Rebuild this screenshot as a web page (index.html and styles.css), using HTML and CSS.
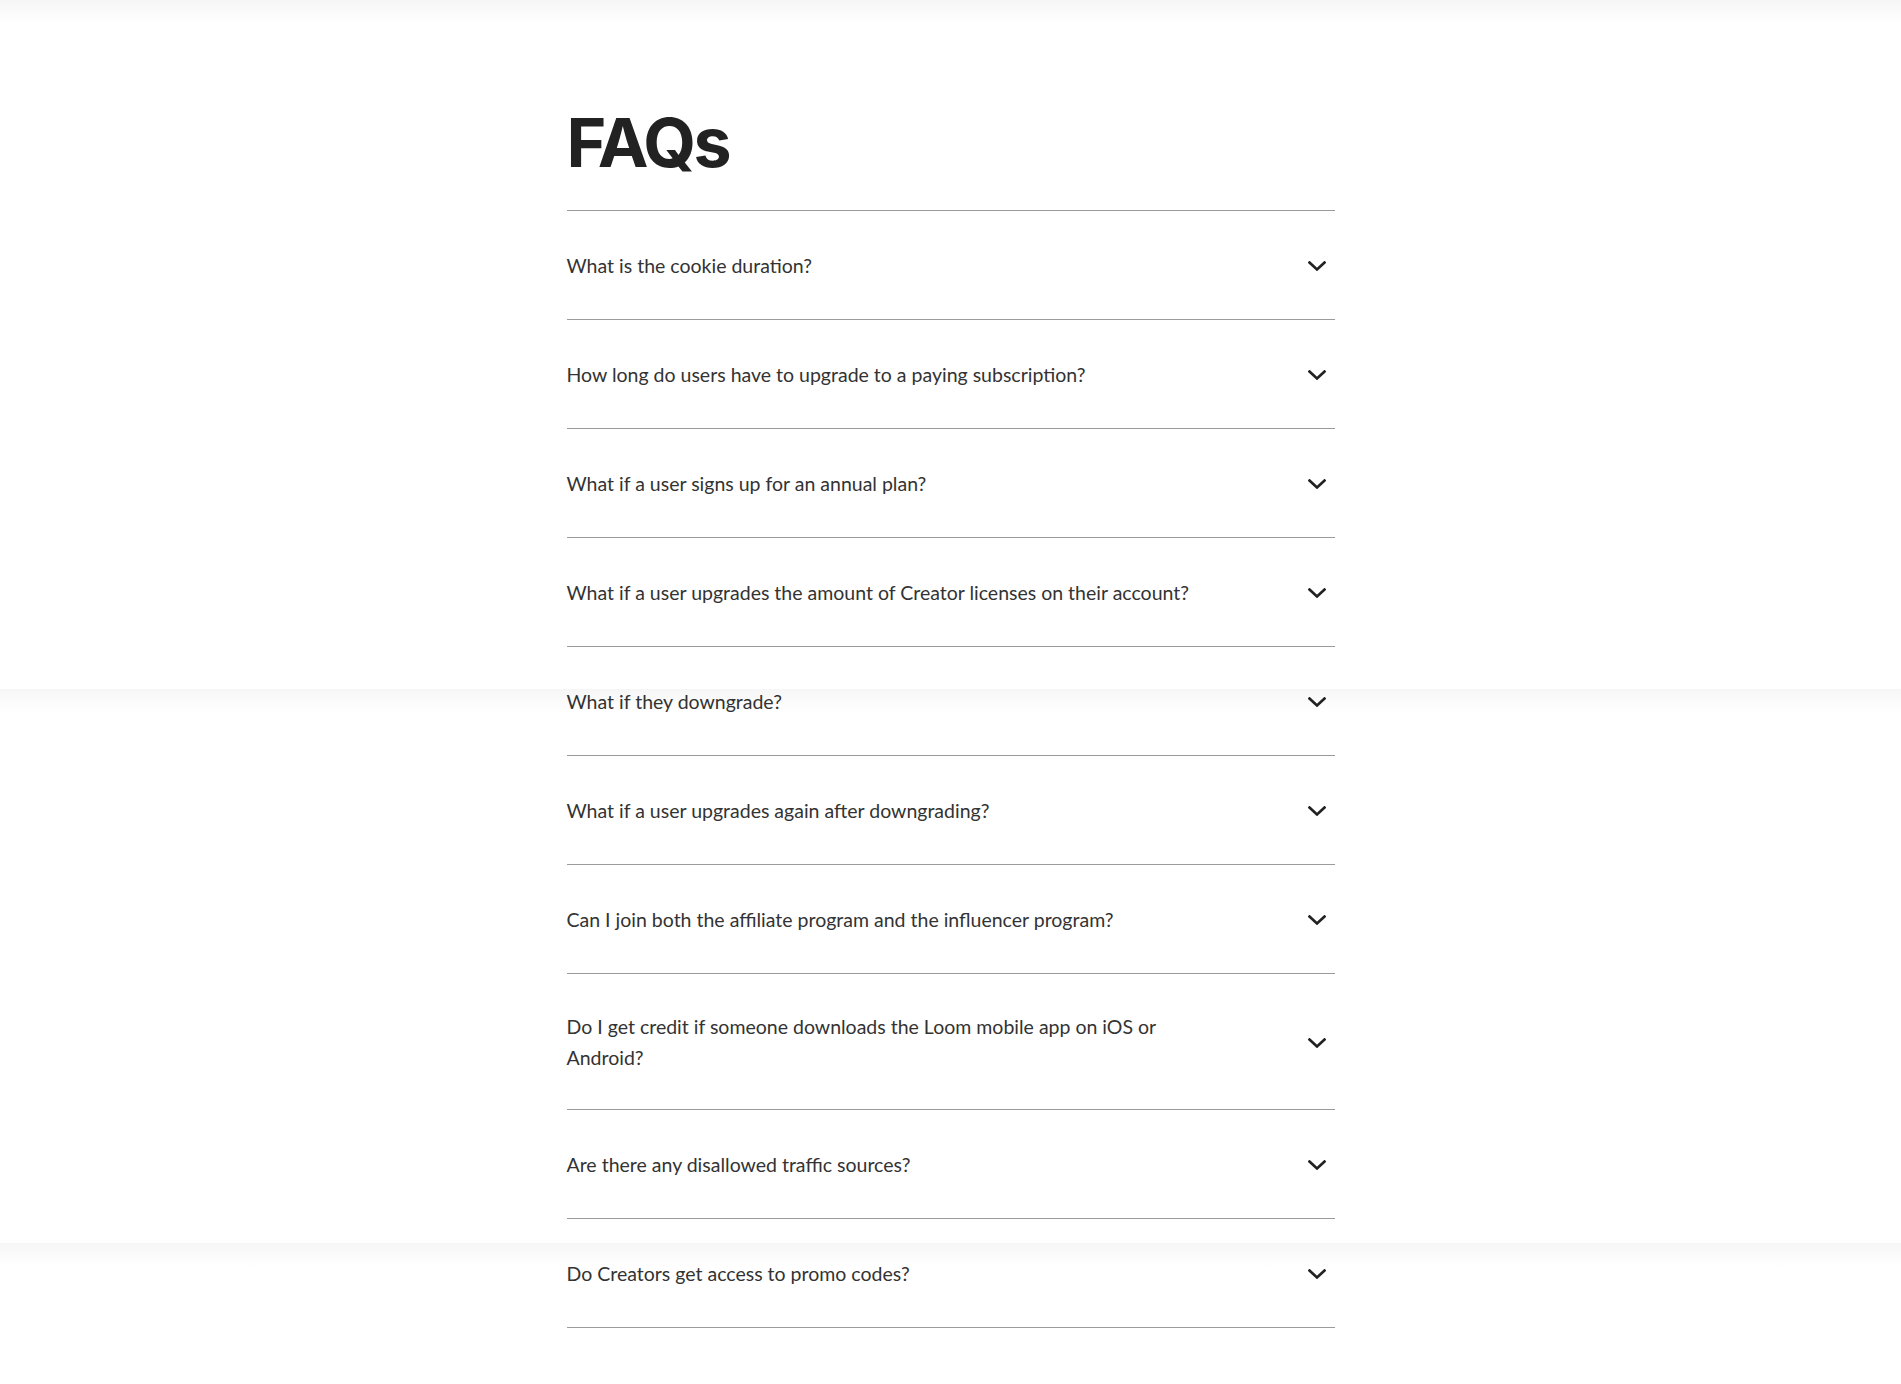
FILE: index.html
```html
<!DOCTYPE html>
<html lang="en">
<head>
<meta charset="utf-8">
<title>FAQs</title>
<link rel="stylesheet" href="styles.css">
</head>
<body>
<div class="shade shade-top"></div>
<div class="shade shade-mid"></div>
<div class="shade shade-low"></div>
<section class="faq">
  <h2 class="faq-title">FAQs</h2>
  <ul class="faq-list">
    <li class="faq-item"><div class="faq-q" role="button"><span class="faq-text">What is the cookie duration?</span><span class="faq-icon"><svg viewBox="0 0 18 10" width="18" height="10"><path d="M1.5 1.5 L9 8.5 L16.5 1.5" fill="none" stroke="currentColor" stroke-width="2.6" stroke-linecap="square"/></svg></span></div></li>
    <li class="faq-item"><div class="faq-q" role="button"><span class="faq-text">How long do users have to upgrade to a paying subscription?</span><span class="faq-icon"><svg viewBox="0 0 18 10" width="18" height="10"><path d="M1.5 1.5 L9 8.5 L16.5 1.5" fill="none" stroke="currentColor" stroke-width="2.6" stroke-linecap="square"/></svg></span></div></li>
    <li class="faq-item"><div class="faq-q" role="button"><span class="faq-text">What if a user signs up for an annual plan?</span><span class="faq-icon"><svg viewBox="0 0 18 10" width="18" height="10"><path d="M1.5 1.5 L9 8.5 L16.5 1.5" fill="none" stroke="currentColor" stroke-width="2.6" stroke-linecap="square"/></svg></span></div></li>
    <li class="faq-item"><div class="faq-q" role="button"><span class="faq-text">What if a user upgrades the amount of Creator licenses on their account?</span><span class="faq-icon"><svg viewBox="0 0 18 10" width="18" height="10"><path d="M1.5 1.5 L9 8.5 L16.5 1.5" fill="none" stroke="currentColor" stroke-width="2.6" stroke-linecap="square"/></svg></span></div></li>
    <li class="faq-item"><div class="faq-q" role="button"><span class="faq-text">What if they downgrade?</span><span class="faq-icon"><svg viewBox="0 0 18 10" width="18" height="10"><path d="M1.5 1.5 L9 8.5 L16.5 1.5" fill="none" stroke="currentColor" stroke-width="2.6" stroke-linecap="square"/></svg></span></div></li>
    <li class="faq-item"><div class="faq-q" role="button"><span class="faq-text">What if a user upgrades again after downgrading?</span><span class="faq-icon"><svg viewBox="0 0 18 10" width="18" height="10"><path d="M1.5 1.5 L9 8.5 L16.5 1.5" fill="none" stroke="currentColor" stroke-width="2.6" stroke-linecap="square"/></svg></span></div></li>
    <li class="faq-item"><div class="faq-q" role="button"><span class="faq-text">Can I join both the affiliate program and the influencer program?</span><span class="faq-icon"><svg viewBox="0 0 18 10" width="18" height="10"><path d="M1.5 1.5 L9 8.5 L16.5 1.5" fill="none" stroke="currentColor" stroke-width="2.6" stroke-linecap="square"/></svg></span></div></li>
    <li class="faq-item"><div class="faq-q" role="button"><span class="faq-text">Do I get credit if someone downloads the Loom mobile app on iOS or Android?</span><span class="faq-icon"><svg viewBox="0 0 18 10" width="18" height="10"><path d="M1.5 1.5 L9 8.5 L16.5 1.5" fill="none" stroke="currentColor" stroke-width="2.6" stroke-linecap="square"/></svg></span></div></li>
    <li class="faq-item"><div class="faq-q" role="button"><span class="faq-text">Are there any disallowed traffic sources?</span><span class="faq-icon"><svg viewBox="0 0 18 10" width="18" height="10"><path d="M1.5 1.5 L9 8.5 L16.5 1.5" fill="none" stroke="currentColor" stroke-width="2.6" stroke-linecap="square"/></svg></span></div></li>
    <li class="faq-item"><div class="faq-q" role="button"><span class="faq-text">Do Creators get access to promo codes?</span><span class="faq-icon"><svg viewBox="0 0 18 10" width="18" height="10"><path d="M1.5 1.5 L9 8.5 L16.5 1.5" fill="none" stroke="currentColor" stroke-width="2.6" stroke-linecap="square"/></svg></span></div></li>
  </ul>
</section>
</body>
</html>
```

FILE: styles.css
```css
html, body {
  margin: 0;
  padding: 0;
  background: #fff;
}

body {
  position: relative;
  min-height: 1384px;
  font-family: "Lato", "Liberation Sans", sans-serif;
  color: #333;
}

.shade {
  position: absolute;
  left: 0;
  right: 0;
  height: 24px;
  background: linear-gradient(to bottom, rgba(0, 0, 0, 0.035), rgba(0, 0, 0, 0));
  pointer-events: none;
  z-index: 2;
}

.shade-top { top: 0; }
.shade-mid { top: 689px; }
.shade-low { top: 1243px; }

.faq {
  width: 768px;
  margin: 0 auto;
  padding-top: 108px;
}

.faq-title {
  margin: 0 0 34px;
  font-family: "Inter", "Liberation Sans", sans-serif;
  font-size: 68px;
  line-height: 68px;
  font-weight: 700;
  letter-spacing: -2.5px;
  color: #222;
}

.faq-list {
  list-style: none;
  margin: 0;
  padding: 0;
  border-top: 1px solid #9b9b9b;
}

.faq-item {
  display: flex;
  flex-direction: column;
  border-bottom: 1px solid #9b9b9b;
}

.faq-q {
  box-sizing: border-box;
  min-height: 108px;
  padding: 36.5px 0;
  display: flex;
  align-items: center;
  justify-content: space-between;
  font-size: 19.5px;
  line-height: 31px;
  color: #333;
  cursor: pointer;
}

.faq-text {
  max-width: 640px;
}

.faq-icon {
  width: 36px;
  height: 31px;
  flex: none;
  display: flex;
  align-items: center;
  justify-content: center;
  color: #222;
}

.faq-icon svg {
  display: block;
  transform: translateY(1px);
}
```
